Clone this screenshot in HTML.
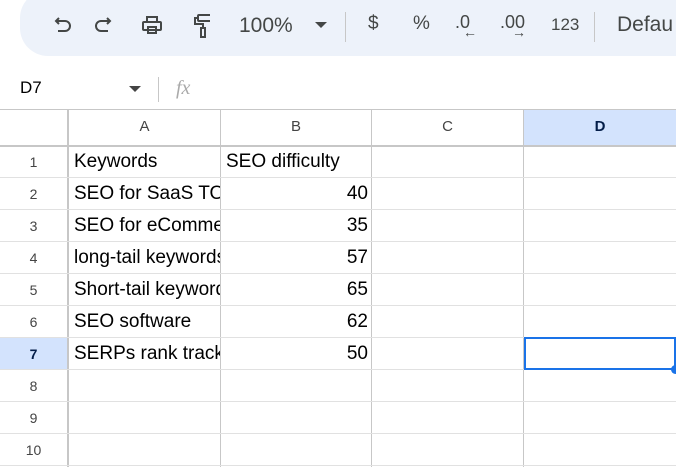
<!DOCTYPE html><html><head><style>
body{margin:0;width:676px;height:467px;overflow:hidden;background:#fff;font-family:"Liberation Sans",Arial,sans-serif;position:relative}
.a{position:absolute}
.tb{left:20px;top:-10px;width:700px;height:66px;background:#edf2fa;border-radius:28px}
.t{color:#444746;font-size:21px}
.g{position:absolute;background:#e1e1e1}
.c{position:absolute;font-size:19px;color:#000;line-height:32px;white-space:nowrap;overflow:hidden}
.rh{position:absolute;left:0;width:67px;text-align:center;font-size:14px;color:#444;line-height:32px}
</style></head><body>
<div class="a tb"></div>
<svg class="a" style="left:50px;top:12px" width="160" height="30" viewBox="0 0 160 30" fill="none" stroke="#444746" stroke-width="2">
<path d="M6 9h9a5 5 0 0 1 0 10H8M9 6L6 9l3 3"/>
<path d="M60 9h-9a5 5 0 0 0 0 10h7M57 6l3 3-3 3"/>
<rect x="97" y="5" width="10" height="5"/><rect x="93" y="10" width="18" height="8" rx="1"/><rect x="98" y="15" width="8" height="6"/>
<rect x="148" y="3" width="13" height="6" rx="1"/><path d="M148 6h-3v6h8v4"/><rect x="151" y="16" width="4" height="9"/>
</svg>
<div class="a t" style="left:239px;top:14px">100%</div>
<div class="a" style="left:315px;top:22px;border-left:6px solid transparent;border-right:6px solid transparent;border-top:6px solid #444746"></div>
<div class="a" style="left:345px;top:12px;width:1px;height:30px;background:#c7c7c7"></div>
<div class="a t" style="left:368px;top:13px;font-size:19px">$</div>
<div class="a t" style="left:413px;top:13px;font-size:19px">%</div>
<div class="a t" style="left:355px;top:0"></div>
<div class="a t" style="left:455px;top:12px;font-size:18px">.0</div>
<div class="a t" style="left:463px;top:24px;font-size:14px;font-weight:bold">←</div>
<div class="a t" style="left:500px;top:12px;font-size:18px">.00</div>
<div class="a t" style="left:512px;top:24px;font-size:14px;font-weight:bold">→</div>
<div class="a t" style="left:551px;top:15px;font-size:17px">123</div>
<div class="a" style="left:594px;top:12px;width:1px;height:30px;background:#c7c7c7"></div>
<div class="a t" style="left:617px;top:13px">Defau</div>
<div class="a" style="left:20px;top:78px;font-size:17px;color:#000">D7</div>
<div class="a" style="left:129px;top:86px;border-left:6px solid transparent;border-right:6px solid transparent;border-top:6px solid #444"></div>
<div class="a" style="left:158px;top:77px;width:1px;height:25px;background:#c7c7c7"></div>
<div class="a" style="left:176px;top:77px;font-size:20px;color:#aaa;font-style:italic;font-family:'Liberation Serif',serif">fx</div>
<div class="g" style="left:0;top:109px;width:676px;height:1px;background:#c7c7c7"></div>
<div class="a" style="left:524px;top:110px;width:152px;height:35px;background:#d3e3fd"></div>
<div class="a" style="left:0;top:338px;width:67px;height:32px;background:#d3e3fd"></div>
<div class="g" style="left:0;top:145px;width:676px;height:2px;background:#c7c7c7"></div>
<div class="g" style="left:67px;top:110px;width:2px;height:357px;background:#c7c7c7"></div>
<div class="g" style="left:220px;top:110px;width:1px;height:357px;background:#c7c7c7"></div>
<div class="g" style="left:371px;top:110px;width:1px;height:357px;background:#c7c7c7"></div>
<div class="g" style="left:523px;top:110px;width:1px;height:357px;background:#c7c7c7"></div>
<div class="g" style="left:0;top:177px;width:676px;height:1px"></div>
<div class="g" style="left:0;top:209px;width:676px;height:1px"></div>
<div class="g" style="left:0;top:241px;width:676px;height:1px"></div>
<div class="g" style="left:0;top:273px;width:676px;height:1px"></div>
<div class="g" style="left:0;top:305px;width:676px;height:1px"></div>
<div class="g" style="left:0;top:337px;width:676px;height:1px"></div>
<div class="g" style="left:0;top:369px;width:676px;height:1px"></div>
<div class="g" style="left:0;top:401px;width:676px;height:1px"></div>
<div class="g" style="left:0;top:433px;width:676px;height:1px"></div>
<div class="g" style="left:0;top:465px;width:676px;height:1px"></div>
<div class="a" style="left:69px;top:118px;width:151px;text-align:center;font-size:15px;color:#444">A</div>
<div class="a" style="left:221px;top:118px;width:150px;text-align:center;font-size:15px;color:#444">B</div>
<div class="a" style="left:372px;top:118px;width:151px;text-align:center;font-size:15px;color:#444">C</div>
<div class="a" style="left:524px;top:118px;width:152px;text-align:center;font-size:15px;color:#041e49;font-weight:bold">D</div>
<div class="rh" style="top:146px">1</div><div class="rh" style="top:178px">2</div><div class="rh" style="top:210px">3</div><div class="rh" style="top:242px">4</div><div class="rh" style="top:274px">5</div><div class="rh" style="top:306px">6</div><div class="rh" style="top:338px;font-weight:bold;color:#041e49">7</div><div class="rh" style="top:370px">8</div><div class="rh" style="top:402px">9</div><div class="rh" style="top:434px">10</div>
<div class="c" style="left:74px;top:146px;width:146px">Keywords</div>
<div class="c" style="left:226px;top:146px;width:150px">SEO difficulty</div>
<div class="c" style="left:74px;top:178px;width:146px">SEO for SaaS TOOLS</div>
<div class="c" style="left:74px;top:210px;width:146px">SEO for eCommerce</div>
<div class="c" style="left:74px;top:242px;width:146px">long-tail keywords</div>
<div class="c" style="left:74px;top:274px;width:146px">Short-tail keywords</div>
<div class="c" style="left:74px;top:306px;width:146px">SEO software</div>
<div class="c" style="left:74px;top:338px;width:146px">SERPs rank tracker</div>
<div class="c" style="left:221px;top:178px;width:147px;text-align:right">40</div>
<div class="c" style="left:221px;top:210px;width:147px;text-align:right">35</div>
<div class="c" style="left:221px;top:242px;width:147px;text-align:right">57</div>
<div class="c" style="left:221px;top:274px;width:147px;text-align:right">65</div>
<div class="c" style="left:221px;top:306px;width:147px;text-align:right">62</div>
<div class="c" style="left:221px;top:338px;width:147px;text-align:right">50</div>
<div class="a" style="left:524px;top:337px;width:148px;height:29px;border:2px solid #1a73e8"></div>
<div class="a" style="left:671px;top:365px;width:9px;height:9px;border-radius:50%;background:#1a73e8"></div>
</body></html>
